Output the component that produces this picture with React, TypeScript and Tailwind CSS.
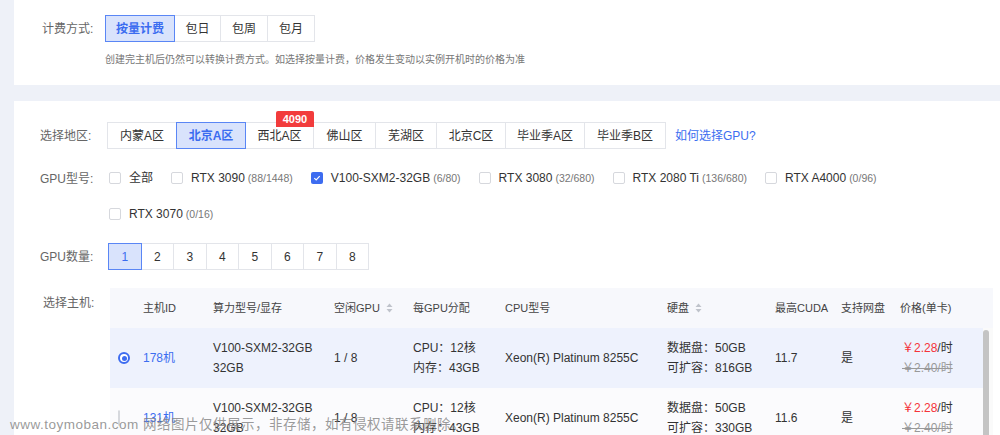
import React from "react";

const FONT = "font-['Liberation_Sans','Noto_Sans_CJK_SC',sans-serif]";

function SegButton({
  label,
  active,
  className = "",
}: {
  label: string;
  active?: boolean;
  className?: string;
}) {
  return (
    <div
      className={`relative -ml-px flex h-[27px] items-center justify-center border text-[12px] first:ml-0 ${
        active
          ? "z-10 border-[#5a86f5] bg-[#d9e3fc] font-semibold text-[#3b6cf0]"
          : "border-[#e3e5ea] bg-white text-[#333]"
      } ${className}`}
    >
      {label}
    </div>
  );
}

function Checkbox({ checked }: { checked?: boolean }) {
  return checked ? (
    <span className="flex h-[12px] w-[12px] items-center justify-center rounded-[2px] bg-[#3d6cf0]">
      <svg width="8" height="8" viewBox="0 0 8 8" fill="none">
        <path d="M1.3 4.1 3.2 5.9 6.7 2.2" stroke="white" strokeWidth="1.2" />
      </svg>
    </span>
  ) : (
    <span className="h-[12px] w-[12px] rounded-[2px] border border-[#d6d8dd] bg-white" />
  );
}

function SortIcon() {
  return (
    <svg width="7" height="10" viewBox="0 0 7 10" className="ml-[6px]">
      <path d="M3.5 0.5 6.5 4H0.5z" fill="#bfc3cb" />
      <path d="M3.5 9.5 6.5 6H0.5z" fill="#bfc3cb" />
    </svg>
  );
}

function Radio({ checked }: { checked?: boolean }) {
  return checked ? (
    <span className="flex h-[12px] w-[12px] items-center justify-center rounded-full border-[2px] border-[#3d6cf0] bg-white">
      <span className="h-[5px] w-[5px] rounded-full bg-[#3d6cf0]" />
    </span>
  ) : (
    <span className="h-[12px] w-[12px] rounded-full border border-[#d6d8dd] bg-white" />
  );
}

const gpuTypes = [
  { name: "全部", count: "" },
  { name: "RTX 3090", count: "(88/1448)" },
  { name: "V100-SXM2-32GB", count: "(6/80)", checked: true },
  { name: "RTX 3080", count: "(32/680)" },
  { name: "RTX 2080 Ti", count: "(136/680)" },
  { name: "RTX A4000", count: "(0/96)" },
];

const regions = [
  { name: "内蒙A区", w: "w-[70px]" },
  { name: "北京A区", w: "w-[70px]", active: true },
  { name: "西北A区", w: "w-[69px]", badge: "4090" },
  { name: "佛山区", w: "w-[63px]" },
  { name: "芜湖区", w: "w-[62px]" },
  { name: "北京C区", w: "w-[70px]" },
  { name: "毕业季A区", w: "w-[80px]" },
  { name: "毕业季B区", w: "w-[82px]" },
];

const hosts = [
  { id: "178机", cuda: "11.7", expand: "816GB", selected: true },
  { id: "131机", cuda: "11.6", expand: "330GB" },
];

const cols =
  "grid grid-cols-[33px_70px_121px_79px_92px_162px_108px_66px_59px_83px] items-center";

export default function App() {
  return (
    <div className={`relative h-[435px] w-[1000px] overflow-hidden bg-[#eef1f8] ${FONT}`}>
      {/* billing */}
      <div className="ml-[14px] h-[85px] bg-white pt-[15px]">
        <div className="flex items-center">
          <div className="w-[91px] pl-[28px] text-[12px] text-[#666]">计费方式:</div>
          <div className="flex">
            <SegButton label="按量计费" active className="w-[70px]" />
            <SegButton label="包日" className="w-[47px]" />
            <SegButton label="包周" className="w-[48px]" />
            <SegButton label="包月" className="w-[48px]" />
          </div>
        </div>
        <div className="ml-[91px] mt-[10px] text-[10px] text-[#777]">
          创建完主机后仍然可以转换计费方式。如选择按量计费，价格发生变动以实例开机时的价格为准
        </div>
      </div>

      {/* config */}
      <div className="ml-[14px] mt-[16px] h-[400px] bg-white pt-[21px]">
        <div className="flex items-center">
          <div className="w-[93px] pl-[26px] text-[12px] text-[#666]">选择地区:</div>
          <div className="flex">
            {regions.map((r) => (
              <div key={r.name} className="relative -ml-px first:ml-0">
                <SegButton label={r.name} active={r.active} className={r.w} />
                {r.badge && (
                  <span className="absolute -top-[11px] right-0 z-20 flex h-[16px] w-[38px] items-center justify-center rounded-t-[2px] bg-[#f23c3c] text-[11px] font-bold text-white">
                    {r.badge}
                  </span>
                )}
              </div>
            ))}
          </div>
          <a className="ml-[9px] text-[12px] text-[#3c6ef0]">如何选择GPU?</a>
        </div>

        <div className="mt-[20px] flex">
          <div className="w-[95px] pl-[26px] pt-[1px] text-[12px] text-[#666]">GPU型号:</div>
          <div className="flex w-[800px] flex-wrap gap-x-[18px] gap-y-[18px]">
            {gpuTypes.map((g) => (
              <div key={g.name} className="flex h-[18px] items-center gap-[8px]">
                <Checkbox checked={g.checked} />
                <span className="text-[12px] text-[#333]">
                  {g.name}
                  {g.count && (
                    <span className="ml-[3px] text-[10.5px] text-[#777]">{g.count}</span>
                  )}
                </span>
              </div>
            ))}
            <div className="flex h-[18px] basis-full items-center gap-[8px]">
              <Checkbox />
              <span className="text-[12px] text-[#333]">
                RTX 3070<span className="ml-[3px] text-[10.5px] text-[#777]">(0/16)</span>
              </span>
            </div>
          </div>
        </div>

        <div className="mt-[20px] flex items-center">
          <div className="w-[94px] pl-[26px] text-[12px] text-[#666]">GPU数量:</div>
          <div className="flex">
            {[1, 2, 3, 4, 5, 6, 7, 8].map((n) => (
              <SegButton key={n} label={String(n)} active={n === 1} className="w-[33.5px] !font-normal" />
            ))}
          </div>
        </div>

        <div className="mt-[18px] flex">
          <div className="w-[96px] pl-[29px] pt-[6px] text-[12px] text-[#666]">选择主机:</div>
          <div className="flex flex-col">
            <div className={`${cols} h-[40px] bg-[#f7f8fc] text-[11px] text-[#444]`}>
              <span />
              <span>主机ID</span>
              <span>算力型号/显存</span>
              <span className="flex items-center">
                空闲GPU
                <SortIcon />
              </span>
              <span>每GPU分配</span>
              <span>CPU型号</span>
              <span className="flex items-center">
                硬盘
                <SortIcon />
              </span>
              <span>最高CUDA</span>
              <span>支持网盘</span>
              <span>价格(单卡)</span>
            </div>
            <div className="flex">
              <div className="flex flex-col">
                {hosts.map((h) => (
                  <div
                    key={h.id}
                    className={`${cols} h-[60px] text-[12px] leading-[20px] text-[#333] ${
                      h.selected ? "bg-[#eef2fd]" : "bg-[#fbfbfd]"
                    }`}
                  >
                    <span className="pl-[8px]">
                      <Radio checked={h.selected} />
                    </span>
                    <span className="text-[#3c6ef0]">{h.id}</span>
                    <span>
                      V100-SXM2-32GB
                      <br />
                      32GB
                    </span>
                    <span>1 / 8</span>
                    <span>
                      CPU：12核
                      <br />
                      内存：43GB
                    </span>
                    <span>Xeon(R) Platinum 8255C</span>
                    <span>
                      数据盘：50GB
                      <br />
                      可扩容：{h.expand}
                    </span>
                    <span>{h.cuda}</span>
                    <span>是</span>
                    <span className="pl-[2px]">
                      <span className="text-[#f5333a]">￥2.28</span>/时
                      <br />
                      <span className="text-[#999] line-through">￥2.40/时</span>
                    </span>
                  </div>
                ))}
              </div>
              <div className="flex w-[10px] justify-start bg-[#fafafa] pt-[2px]">
                <div className="h-[120px] w-[6px] rounded-[3px] bg-[#c4c4c4]" />
              </div>
            </div>
          </div>
        </div>
      </div>

      {/* watermark */}
      <div className="absolute bottom-[0px] left-[10px] text-[13.5px] tracking-[0.5px] text-[#808080]/80">
        www.toymoban.com 网络图片仅供展示，非存储，如有侵权请联系删除。
      </div>
    </div>
  );
}
